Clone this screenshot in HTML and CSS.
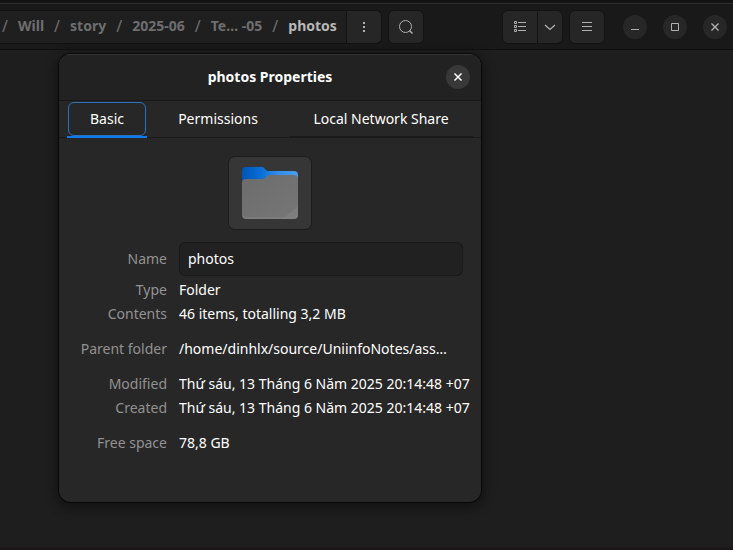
FILE: index.html
```html
<!DOCTYPE html>
<html lang="en">
<head>
<meta charset="utf-8">
<title>photos Properties</title>
<link rel="stylesheet" href="styles.css">
</head>
<body>
<header class="toolbar">
  <nav class="path" aria-label="Path">
    <span class="sep">/</span><a href="#">Will</a>
    <span class="sep">/</span><a href="#">story</a>
    <span class="sep">/</span><a href="#">2025-06</a>
    <span class="sep">/</span><a href="#">Te… -05</a>
    <span class="sep">/</span><a href="#" class="current">photos</a>
  </nav>
  <button class="tool path-menu" aria-label="Folder menu">
    <svg width="16" height="16"><path d="M7 3h2v2H7zM7 7h2v2H7zM7 11h2v2H7z" fill="currentColor"/></svg>
  </button>
  <button class="tool search" aria-label="Search">
    <svg width="16" height="16" fill="none" stroke="currentColor"><circle cx="7.5" cy="7.5" r="6"/><path d="M11.500 11.500l3 3" stroke-width="1.500"/></svg>
  </button>
  <div class="view">
    <button class="tool list" aria-label="List view">
      <svg width="16" height="16" fill="none" stroke="currentColor"><path d="M2.500 2.500h2v2h-2zM2.500 6.500h2v2h-2zM2.500 10.500h2v2h-2zM6 3.500h8M6 7.500h8M6 11.500h8"/></svg>
    </button>
    <button class="tool drop" aria-label="View options">
      <svg width="12" height="12" fill="none" stroke="currentColor" stroke-width="1.300"><path d="M1 4l5 4.500L11 4"/></svg>
    </button>
  </div>
  <button class="tool menu" aria-label="Main menu">
    <svg width="16" height="16" fill="none" stroke="currentColor"><path d="M3 3.500h10M3 7.500h10M3 11.500h10"/></svg>
  </button>
  <div class="window-controls">
    <button class="round" aria-label="Minimize"><svg width="16" height="16" fill="none" stroke="currentColor"><path d="M4 10.500h8"/></svg></button>
    <button class="round" aria-label="Maximize"><svg width="16" height="16" fill="none" stroke="currentColor"><path d="M4.500 4.500h7v7h-7z"/></svg></button>
    <button class="round" aria-label="Close"><svg width="16" height="16" fill="none" stroke="currentColor" stroke-width="1.400"><path d="M4.500 4.500l7 7M11.500 4.500l-7 7"/></svg></button>
  </div>
</header>

<main class="files"></main>

<section class="dialog" role="dialog" aria-labelledby="title">
  <div class="titlebar">
    <h1 id="title">photos Properties</h1>
    <button class="round close" aria-label="Close dialog"><svg width="16" height="16" fill="none" stroke="currentColor" stroke-width="1.500"><path d="M4.500 4.500l7 7M11.500 4.500l-7 7"/></svg></button>
  </div>
  <div class="tabs" role="tablist">
    <button class="tab active" role="tab" aria-selected="true"><span>Basic</span></button>
    <button class="tab" role="tab" aria-selected="false"><span>Permissions</span></button>
    <button class="tab shaded" role="tab" aria-selected="false"><span>Local Network Share</span></button>
  </div>
  <div class="content">
    <button class="folder" aria-label="Folder icon">
      <svg width="58" height="54" viewBox="0 0 58 54">
        <defs>
          <linearGradient id="blue" x2="1"><stop stop-color="#0054b4"/><stop offset=".35" stop-color="#0870d8"/><stop offset=".65" stop-color="#348de9"/><stop offset="1" stop-color="#4b9cf0"/></linearGradient>
          <linearGradient id="gray" x2="1" y2="1"><stop stop-color="#6c6c6c"/><stop offset=".86" stop-color="#757575"/><stop offset=".86" stop-color="#7d7d7d"/><stop offset="1" stop-color="#7d7d7d"/></linearGradient>
        </defs>
        <path d="M1 17V5q0-4 4-4h16q2 0 3 2l2 2h27q4 0 4 4v9H1z" fill="url(#blue)"/>
        <path d="M1 17q0-4 4-4h16q2 0 3-1l2-2q1-1 3-1h24q4 0 4 4v36q0 4-4 4H5q-4 0-4-4z" fill="url(#gray)"/>
        <path d="M2 50q1 2 3 2h48q3 0 3-2" fill="none" stroke="#858585"/>
      </svg>
    </button>
    <form class="details">
      <label for="name">Name</label>
      <input id="name" type="text" value="photos" autocomplete="off" spellcheck="false">
      <dl>
        <dt>Type</dt><dd>Folder</dd>
        <dt>Contents</dt><dd>46 items, totalling 3,2 MB</dd>
      </dl>
      <dl>
        <dt>Parent folder</dt><dd>/home/dinhlx/source/UniinfoNotes/ass…</dd>
      </dl>
      <dl>
        <dt>Modified</dt><dd>Thứ sáu, 13 Tháng 6 Năm 2025 20:14:48 +07</dd>
        <dt>Created</dt><dd>Thứ sáu, 13 Tháng 6 Năm 2025 20:14:48 +07</dd>
      </dl>
      <dl>
        <dt>Free space</dt><dd>78,8 GB</dd>
      </dl>
    </form>
  </div>
</section>
</body>
</html>
```

FILE: styles.css
```css
* {
  box-sizing: border-box;
}

body {
  margin: 0;
  min-height: 100vh;
  display: flex;
  flex-direction: column;
  position: relative;
  overflow: hidden;
  background: #1e1e1e;
  border-top: 3px solid #131313;
  border-bottom: 3px solid #1b1618;
  color: #fff;
  font: 14px/24px "Noto Sans", "Open Sans", sans-serif;
}

button,
input {
  font: inherit;
  color: inherit;
  margin: 0;
  padding: 0;
}

button {
  display: flex;
  align-items: center;
  justify-content: center;
  border: 0;
}

svg {
  display: block;
  flex: none;
}

.toolbar {
  display: flex;
  align-items: center;
  height: 47px;
  padding-right: 6px;
  background: #191919;
  border-top: 1px solid #2a2a2a;
  border-bottom: 1px solid #101010;
  color: #b0b0b0;
}

.path {
  display: flex;
  flex: 0 0 347px;
  align-items: center;
  justify-content: space-between;
  height: 34px;
  padding: 0 9px 2px 2px;
  background: #1f1f1f;
  border: solid #121212;
  border-width: 1px 1px 1px 0;
  font-weight: 700;
  white-space: nowrap;
}

.path a {
  color: #6e6e6e;
  text-decoration: none;
}

.path .current {
  color: #b8b8b8;
}

.sep {
  color: #6e6e6e;
  font-size: 16px;
  font-weight: 400;
}

.tool {
  width: 36px;
  height: 34px;
  background: #262626;
  border: 1px solid #131313;
  border-radius: 6px;
}

.path-menu {
  width: 35px;
  border-left: 0;
  border-radius: 0 6px 6px 0;
}

.search {
  margin-left: 6px;
}

.view {
  display: flex;
  margin-left: auto;
}

.list {
  border-radius: 6px 0 0 6px;
}

.drop {
  width: 25px;
  border-left: 0;
  border-radius: 0 6px 6px 0;
}

.menu {
  margin: 0 18px 0 6px;
}

.window-controls {
  display: flex;
  gap: 16px;
}

.round {
  width: 24px;
  height: 24px;
  border-radius: 50%;
  background: #272727;
}

.files {
  flex: 1;
}

.dialog {
  position: absolute;
  top: 51px;
  left: 59px;
  width: 422px;
  min-height: 448px;
  overflow: hidden;
  background: #272727;
  border-radius: 12px;
  box-shadow: 0 0 0 1px #090909, 0 3px 12px 3px rgba(0, 0, 0, 0.4), inset 0 1px #363636;
}

.titlebar {
  display: grid;
  grid-template-columns: 1fr auto 1fr;
  align-items: center;
  height: 47px;
  padding: 0 11px;
  background: #222;
  border-bottom: 1px solid #181818;
  box-shadow: inset 0 1px #363636;
}

h1 {
  grid-column: 2;
  margin: 0;
  font-size: 14px;
  font-weight: 700;
}

.close {
  justify-self: end;
  background: #383838;
}

.tabs {
  display: grid;
  grid-template-columns: 80fr 142fr 184fr;
  height: 37px;
  padding: 0 8px;
  box-shadow: inset 0 -1px #1a1a1a;
}

.tab {
  background: none;
  padding: 1px 1px 0;
  border-bottom: 2px solid transparent;
}

.tab span {
  display: flex;
  flex: 1;
  align-items: center;
  justify-content: center;
  height: 34px;
  border: 1px solid transparent;
  border-radius: 6px;
}

.active {
  border-bottom-color: #0c7bf0;
}

.active span {
  border-color: #2a72be;
}

.shaded {
  border-bottom-color: #1a1a1a;
}

.content {
  padding: 18px;
}

.folder {
  width: 84px;
  height: 74px;
  margin: 0 auto 12px;
  background: #363636;
  border: 1px solid #1c1c1c;
  border-radius: 7px;
}

.details {
  display: grid;
  grid-template-columns: 90px minmax(0, 1fr);
  column-gap: 12px;
  align-items: center;
}

.details label,
dt {
  color: #929292;
  text-align: right;
}

input {
  width: 100%;
  min-width: 0;
  height: 34px;
  padding: 0 8px 2px;
  background: #212121;
  border: 1px solid #1a1a1a;
  border-radius: 6px;
}

dl {
  display: grid;
  grid-column: 1 / -1;
  grid-template-columns: subgrid;
  margin: 0 0 11px;
}

.details input + dl {
  margin-top: 2px;
}

dt,
dd {
  white-space: nowrap;
}

dd {
  margin: 0;
}
```
